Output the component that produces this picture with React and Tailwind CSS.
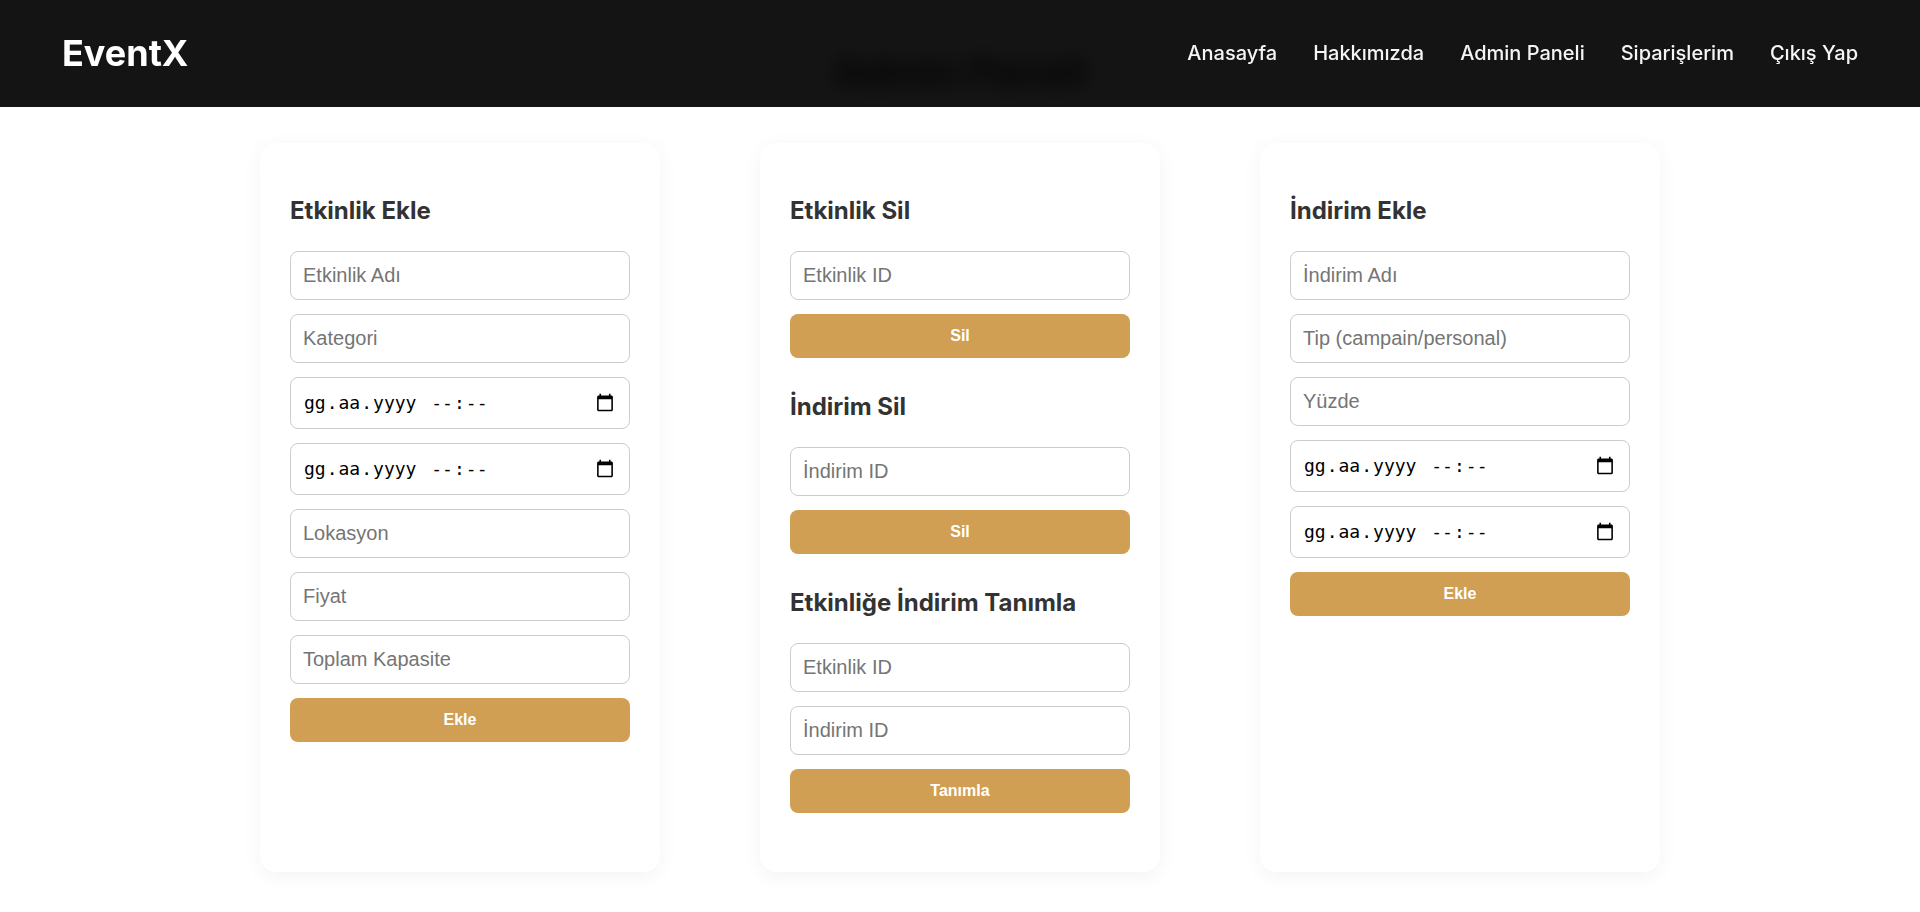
import { useState } from "react";

const navLinks = ["Anasayfa", "Hakkımızda", "Admin Paneli", "Siparişlerim", "Çıkış Yap"];

const cards = [
  [
    {
      title: "Etkinlik Ekle",
      action: "Ekle",
      fields: [
        { label: "Etkinlik Adı" },
        { label: "Kategori" },
        { label: "Başlangıç tarihi", date: true },
        { label: "Bitiş tarihi", date: true },
        { label: "Lokasyon" },
        { label: "Fiyat" },
        { label: "Toplam Kapasite" },
      ],
    },
  ],
  [
    { title: "Etkinlik Sil", action: "Sil", fields: [{ label: "Etkinlik ID" }] },
    { title: "İndirim Sil", action: "Sil", fields: [{ label: "İndirim ID" }] },
    {
      title: "Etkinliğe İndirim Tanımla",
      action: "Tanımla",
      fields: [{ label: "Etkinlik ID" }, { label: "İndirim ID" }],
    },
  ],
  [
    {
      title: "İndirim Ekle",
      action: "Ekle",
      fields: [
        { label: "İndirim Adı" },
        { label: "Tip (campain/personal)" },
        { label: "Yüzde" },
        { label: "Başlangıç tarihi", date: true },
        { label: "Bitiş tarihi", date: true },
      ],
    },
  ],
];

function TextField({ label }) {
  return (
    <input
      type="text"
      aria-label={label}
      placeholder={label}
      className="h-[49px] w-full rounded-lg border border-[#cccccc] bg-white px-3 font-['Liberation_Sans',Arial,sans-serif] text-xl text-black placeholder:text-[#757575]"
    />
  );
}

// An empty native editor shows the browser's own locale, so the Turkish pattern
// stands in for it until a date has been picked.
function DateTimeField({ label }) {
  const [value, setValue] = useState("");
  return (
    <div className="relative font-['DejaVu_Sans_Mono',monospace] text-black">
      <input
        type="datetime-local"
        aria-label={label}
        value={value}
        onChange={(e) => setValue(e.target.value)}
        className={
          value
            ? "block h-[52px] w-full rounded-lg border border-[#cccccc] bg-white px-3 text-xl"
            : "block h-[52px] w-full rounded-lg border border-[#cccccc] bg-white px-3 text-xl [&::-webkit-datetime-edit]:invisible"
        }
      />
      {!value && (
        <span
          aria-hidden="true"
          className="pointer-events-none absolute inset-y-0 left-[13px] flex items-center text-lg whitespace-pre"
        >
          <span className="px-px">gg</span>.<span className="px-px">aa</span>.
          <span className="px-px">yyyy</span>
          <span className="px-px"> </span>
          <span className="px-px">--</span>:<span className="px-px">--</span>
        </span>
      )}
    </div>
  );
}

function FormSection({ title, fields, action }) {
  return (
    <form className="pt-[22px]" onSubmit={(e) => e.preventDefault()}>
      <h2 className="mb-6 text-2xl leading-8 font-bold text-[#333333]">{title}</h2>
      <div className="flex flex-col gap-3.5">
        {fields.map((field, i) =>
          field.date ? (
            <DateTimeField key={i} label={field.label} />
          ) : (
            <TextField key={i} label={field.label} />
          )
        )}
        <button
          type="submit"
          className="h-11 w-full cursor-pointer rounded-lg bg-[#d19f53] font-['Liberation_Sans',Arial,sans-serif] text-base font-bold text-white"
        >
          {action}
        </button>
      </div>
    </form>
  );
}

export default function App() {
  return (
    <div lang="tr" className="min-h-screen bg-white font-[Inter,sans-serif]">
      <header className="fixed inset-x-0 top-0 z-10 flex h-[107px] items-center justify-between bg-black/92 px-[62px] pb-0.5 backdrop-blur-[10px]">
        <a href="#" className="text-4xl font-bold text-white">
          EventX
        </a>
        <nav className="flex gap-9">
          {navLinks.map((link) => (
            <a key={link} href="#" className="text-xl font-medium text-[#f5f5f5]">
              {link}
            </a>
          ))}
        </nav>
      </header>
      <main className="px-8 pt-12 pb-10">
        <h1 className="mb-[47px] text-center text-[40px] leading-[48px] font-bold text-[#333333]">
          Admin Paneli
        </h1>
        <div className="flex justify-center gap-[100px]">
          {cards.map((sections, i) => (
            <section
              key={i}
              className="flex w-full max-w-[400px] flex-col gap-[11px] rounded-2xl bg-white px-[30px] pt-[30px] pb-[59px] shadow-[0_4px_20px_rgba(0,0,0,0.05)]"
            >
              {sections.map((section) => (
                <FormSection key={section.title} {...section} />
              ))}
            </section>
          ))}
        </div>
      </main>
    </div>
  );
}
